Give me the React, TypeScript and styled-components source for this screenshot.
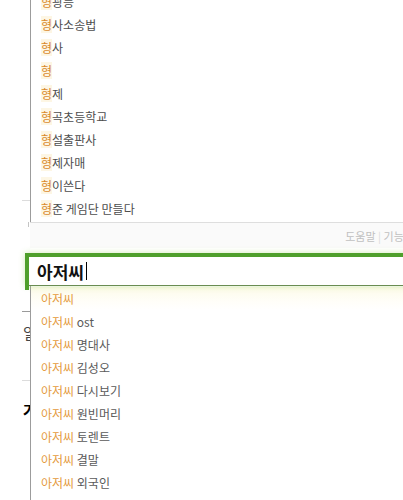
import styled, { createGlobalStyle } from 'styled-components';

const topWords = [
  { key: '형', rest: '광등' },
  { key: '형', rest: '사소송법' },
  { key: '형', rest: '사' },
  { key: '형', rest: '' },
  { key: '형', rest: '제' },
  { key: '형', rest: '곡초등학교' },
  { key: '형', rest: '설출판사' },
  { key: '형', rest: '제자매' },
  { key: '형', rest: '이쓴다' },
  { key: '형', rest: '준 게임단 만들다' },
];

const suggestWords = ['', ' ost', ' 명대사', ' 김성오', ' 다시보기', ' 원빈머리', ' 토렌트', ' 결말', ' 외국인', ' 원빈'];

export default function App() {
  return (
    <>
      <GlobalStyle />
      <Page>
        <PageEdge>
          <EdgeRule $top={200} $color="#dcdcdc" />
          <EdgeTick />
          <EdgeRule $top={84} $color="#9a9a9a" />
          <EdgeGlyph $top={13}>일</EdgeGlyph>
          <EdgeRule $top={39} $color="#dcdcdc" />
          <EdgeGlyph $top={21} $bold>가</EdgeGlyph>
        </PageEdge>

        <Main>
          <TopPanel>
            <List>
              {topWords.map((w, i) => (
                <Row key={`top-${i}`}>
                  <Match $tone="dark">{w.key}</Match>
                  <Rest $tone="dark">{w.rest}</Rest>
                </Row>
              ))}
            </List>
            <Footer>
              <FooterLinks>
                도움말 <Bar>|</Bar> 기능끄기
              </FooterLinks>
            </Footer>
          </TopPanel>

          <SearchBox>
            <QueryField>
              아저씨
              <Caret />
            </QueryField>
          </SearchBox>

          <Dropdown>
            {suggestWords.map((rest, i) => (
              <Row key={`sug-${i}`} $active={i === 0}>
                <Match $tone="light">아저씨</Match>
                <Rest $tone="light">{rest}</Rest>
              </Row>
            ))}
          </Dropdown>
        </Main>
      </Page>
    </>
  );
}

const GlobalStyle = createGlobalStyle`
  html, body {
    margin:0;
    padding:0;
    background:#fff;
    overflow:hidden;
  }
  body {
    font-family:"Noto Sans CJK KR", "Noto Sans", sans-serif;
  }
`;

const Page = styled.div`
  width:403px;
  height:500px;
  overflow:hidden;
  display:grid;
  grid-template-columns:30px 1fr;
  background:#fff;
`;

const PageEdge = styled.div`
  display:flex;
  flex-direction:column;
  overflow:hidden;
`;

const EdgeRule = styled.div<{ $top: number, $color: string }>`
  margin-top:${(p) => p.$top}px;
  margin-left:22px;
  height:1px;
  background:${(p) => p.$color};
`;

const EdgeTick = styled.div`
  margin-top:21px;
  margin-left:28px;
  width:1px;
  height:5px;
  background:#c4c4c4;
`;

const EdgeGlyph = styled.div<{ $top: number, $bold?: boolean }>`
  margin-top:${(p) => p.$top}px;
  margin-left:23px;
  font-size:15px;
  line-height:16px;
  font-weight:${(p) => (p.$bold ? 700 : 400)};
  color:${(p) => (p.$bold ? '#000' : '#444')};
  white-space:nowrap;
`;

const Main = styled.div`
  display:flex;
  flex-direction:column;
  min-width:0;
`;

const TopPanel = styled.div`
  width:410px;
  margin-top:-10px;
  display:flex;
  flex-direction:column;
`;

const List = styled.div`
  display:flex;
  flex-direction:column;
  border-left:1px solid #9c9c9c;
  padding-bottom:2px;
`;

const Row = styled.div<{ $active?: boolean }>`
  height:23px;
  display:flex;
  align-items:center;
  padding-left:10px;
  font-size:12px;
  white-space:pre;
  background:${(p) => (p.$active ? 'linear-gradient(#fdfbe9, #fffef8 60%, #fff)' : 'transparent')};
`;

const Match = styled.span<{ $tone: 'dark' | 'light' }>`
  color:${(p) => (p.$tone === 'dark' ? '#d9892c' : '#e49a3c')};
  background:${(p) => (p.$tone === 'dark' ? '#fdf6e4' : 'transparent')};
`;

const Rest = styled.span<{ $tone: 'dark' | 'light' }>`
  color:${(p) => (p.$tone === 'dark' ? '#4d4d4d' : '#5a5a5a')};
`;

const Footer = styled.div`
  height:25px;
  border-top:1px solid #dedede;
  background:#fafafa;
  display:flex;
  align-items:center;
  justify-content:flex-end;
  padding-right:16px;
`;

const FooterLinks = styled.span`
  font-size:11px;
  color:#c0c0c0;
  white-space:pre;
`;

const Bar = styled.span`
  color:#dadada;
`;

const SearchBox = styled.div`
  position:relative;
  margin-top:5px;
  margin-left:-5px;
  width:420px;
  border-top:4px solid #4f9f2c;
  border-left:4px solid #4f9f2c;
  box-shadow:0 0 6px rgba(150, 210, 90, .45);
  &::after {
    content:"";
    position:absolute;
    left:-4px;
    bottom:-4px;
    width:4px;
    height:4px;
    background:#4f9f2c;
  }
`;

const QueryField = styled.div`
  height:28px;
  border-bottom:1px solid #6a8c52;
  display:flex;
  align-items:center;
  padding-left:8px;
  font-size:17px;
  font-weight:700;
  color:#111;
`;

const Caret = styled.span`
  width:1px;
  height:18px;
  margin-left:2px;
  background:#000;
`;

const Dropdown = styled.div`
  width:410px;
  padding-top:1px;
  display:flex;
  flex-direction:column;
  border-left:1px solid #9c9c9c;
`;
